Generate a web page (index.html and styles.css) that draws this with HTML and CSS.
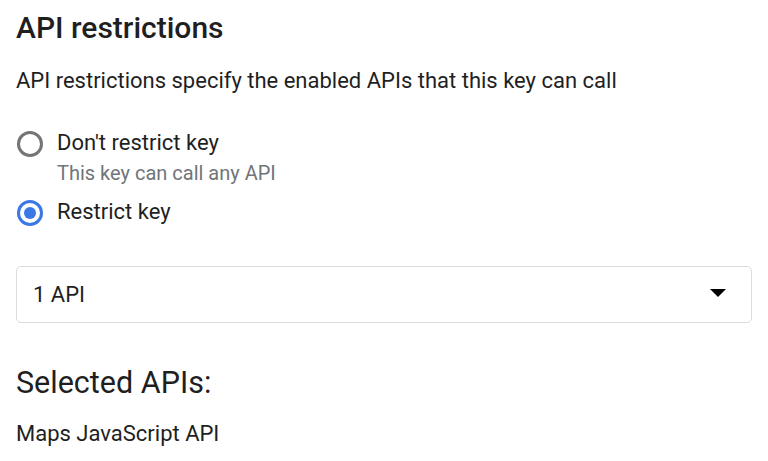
FILE: index.html
```html
<!DOCTYPE html>
<html lang="en">
<head>
  <meta charset="UTF-8">
  <title>API restrictions</title>
  <link rel="stylesheet" href="styles.css">
</head>
<body>

<div class="panel">
  <h2 class="title">API restrictions</h2>
  <p class="desc">API restrictions specify the enabled APIs that this key can call</p>

  <div class="radio-group">
    <label class="radio-row">
      <span class="radio"></span>
      <span class="radio-text">
        <span class="radio-label">Don't restrict key</span>
        <span class="radio-hint">This key can call any API</span>
      </span>
    </label>
    <label class="radio-row">
      <span class="radio checked"></span>
      <span class="radio-text">
        <span class="radio-label">Restrict key</span>
      </span>
    </label>
  </div>

  <div class="select-box">
    <span class="select-value">1 API</span>
    <span class="select-arrow"></span>
  </div>

  <h3 class="subtitle">Selected APIs:</h3>
  <p class="api-item">Maps JavaScript API</p>
</div>

</body>
</html>
```

FILE: styles.css
```css
body {
  margin: 0;
  font-family: Roboto, "Liberation Sans", sans-serif;
  background-color: #fff;
  color: #1f1f1f;
}
.panel {
  padding: 10px 16px 0 16px;
}
.title {
  margin: 0;
  font-size: 30px;
  font-weight: 500;
  line-height: 36px;
}
.desc {
  margin: 22px 0 0 0;
  font-size: 22px;
  line-height: 26px;
}
.radio-group {
  margin-top: 35px;
  display: flex;
  flex-direction: column;
  gap: 12px;
}
.radio-row {
  display: flex;
  align-items: flex-start;
  gap: 14px;
}
.radio {
  width: 20px;
  height: 20px;
  border: 3px solid #757575;
  border-radius: 50%;
  margin: 2px 0 0 1px;
  position: relative;
  flex-shrink: 0;
}
.radio.checked {
  border-color: #3b78e7;
}
.radio.checked::after {
  content: "";
  position: absolute;
  left: 4px;
  top: 4px;
  width: 12px;
  height: 12px;
  border-radius: 50%;
  background-color: #3b78e7;
}
.radio-text {
  display: flex;
  flex-direction: column;
}
.radio-label {
  font-size: 22px;
  line-height: 28px;
}
.radio-hint {
  margin-top: 3px;
  font-size: 20px;
  line-height: 26px;
  color: #70757a;
}
.select-box {
  margin-top: 40px;
  height: 55px;
  border: 1px solid #dadce0;
  border-radius: 5px;
  display: flex;
  align-items: center;
  justify-content: space-between;
  padding: 0 25px 0 16px;
}
.select-value {
  font-size: 22px;
  line-height: 26px;
}
.select-arrow {
  width: 0;
  height: 0;
  margin-bottom: 3px;
  border-left: 8px solid transparent;
  border-right: 8px solid transparent;
  border-top: 8px solid #000;
}
.subtitle {
  margin: 42px 0 0 0;
  font-size: 30.5px;
  font-weight: 400;
  line-height: 36px;
}
.api-item {
  margin: 20px 0 0 0;
  font-size: 22px;
  line-height: 26px;
}
```
